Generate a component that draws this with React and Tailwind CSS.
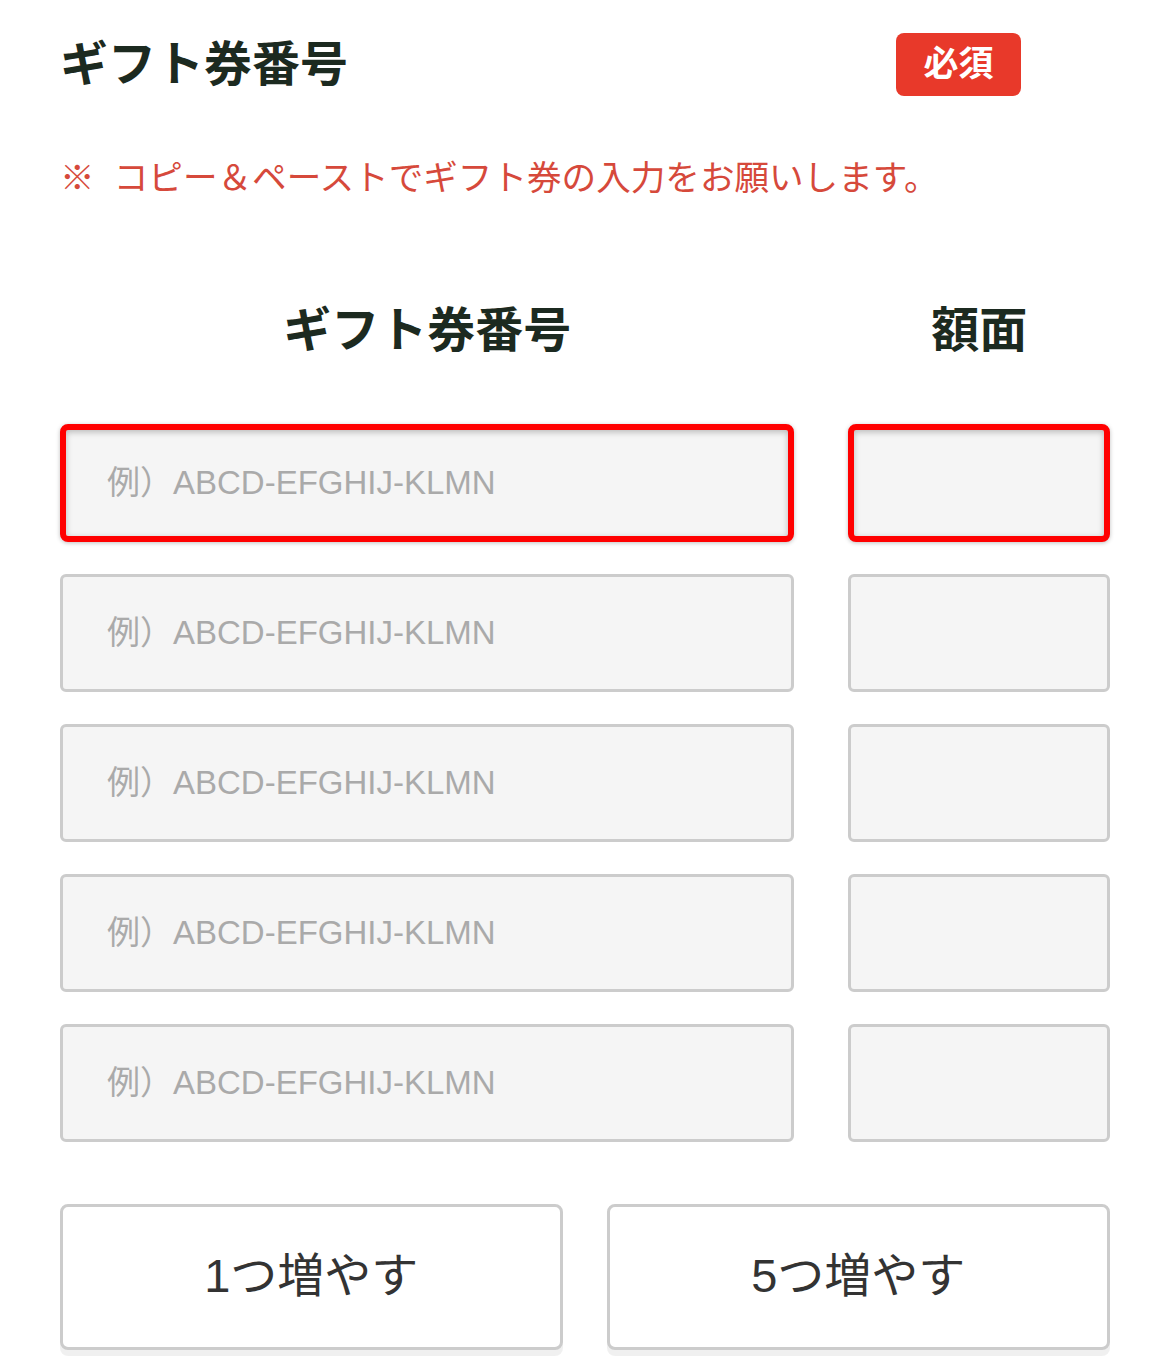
const font = { fontFamily: '"Liberation Sans", "Noto Sans CJK JP", sans-serif' };

const rows = [0, 1, 2, 3, 4];

const GiftCardForm = () => {
    return (
        <div className="min-h-screen bg-white px-[60px] pt-[33px] text-[#1c2a20]" style={font}>
            <div className="flex w-[961px] items-center justify-between">
                <h2 className="text-[48px] font-bold leading-none">ギフト券番号</h2>
                <span className="flex h-[63px] w-[125px] items-center justify-center rounded-lg bg-[#e8392a] text-[35px] font-bold text-white">
                    必須
                </span>
            </div>

            <p className="mt-[65px] text-[34.6px] leading-none text-[#d6493b]">
                ※&nbsp;&nbsp;コピー＆ペーストでギフト券の入力をお願いします。
            </p>

            <div className="mt-[111px] flex gap-[54px]">
                <div className="w-[735px] text-center text-[48px] font-bold leading-none">ギフト券番号</div>
                <div className="w-[262px] text-center text-[48px] font-bold leading-none">額面</div>
            </div>

            <div className="mt-[69px] flex flex-col gap-[32px]">
                {rows.map((i) => (
                    <div key={i} className="flex gap-[54px]">
                        <input
                            type="text"
                            placeholder="例）ABCD-EFGHIJ-KLMN"
                            className={
                                i === 0
                                    ? 'h-[118px] w-[735px] rounded-lg border-[6px] border-[#ff0000] bg-[#f5f5f5] pl-[41px] text-[33px] shadow-[inset_0_2px_6px_rgba(0,0,0,0.25),0_1px_4px_rgba(0,0,0,0.25)] outline-none placeholder:text-[#aaaaaa]'
                                    : 'h-[118px] w-[735px] rounded-md border-[3px] border-[#cccccc] bg-[#f5f5f5] pl-[44px] text-[33px] outline-none placeholder:text-[#aaaaaa]'
                            }
                        />
                        <input
                            type="text"
                            className={
                                i === 0
                                    ? 'h-[118px] w-[262px] rounded-lg border-[6px] border-[#ff0000] bg-[#f5f5f5] text-[33px] shadow-[inset_0_2px_6px_rgba(0,0,0,0.25),0_1px_4px_rgba(0,0,0,0.25)] outline-none'
                                    : 'h-[118px] w-[262px] rounded-md border-[3px] border-[#cccccc] bg-[#f5f5f5] text-[33px] outline-none'
                            }
                        />
                    </div>
                ))}
            </div>

            <div className="mt-[62px] flex gap-[44px]">
                <button className="h-[146px] w-[503px] rounded-lg border-[3px] border-[#cccccc] bg-white text-[47px] text-[#333333] shadow-[0_6px_0_rgba(0,0,0,0.06)]">
                    1つ増やす
                </button>
                <button className="h-[146px] w-[504px] rounded-lg border-[3px] border-[#cccccc] bg-white text-[47px] text-[#333333] shadow-[0_6px_0_rgba(0,0,0,0.06)]">
                    5つ増やす
                </button>
            </div>
        </div>
    );
};

export default function App() {
    return <GiftCardForm />;
}
